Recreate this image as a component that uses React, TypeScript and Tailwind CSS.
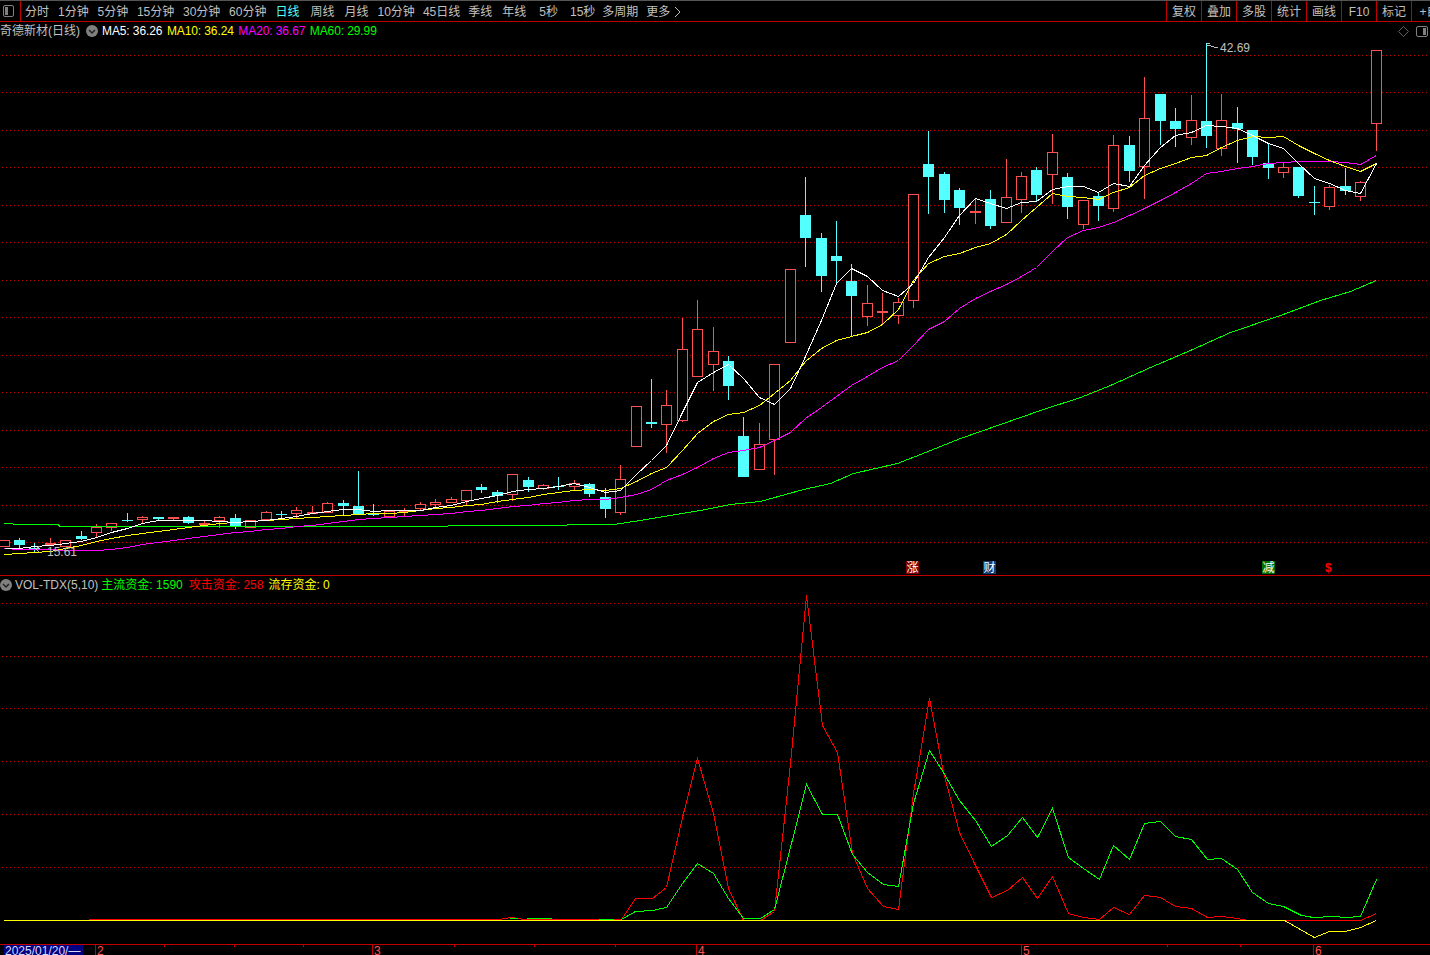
import React from "react";

// candle: [high, top, bottom, low, colour]
type Candle = [number, number, number, number, "r" | "c"];

const candles: Candle[] = [
  [540, 540, 547, 547, "r"], [538, 540, 545, 549, "c"], [543, 548, 549, 553, "c"], [538, 543, 545, 545, "r"],
  [540, 540, 547, 547, "r"], [531, 536, 539, 540, "c"], [524, 527, 533, 537, "r"], [523, 523, 528, 531, "r"],
  [513, 520, 521, 522, "c"], [516, 517, 520, 524, "r"], [517, 517, 519, 521, "c"], [517, 517, 519, 521, "r"],
  [516, 517, 523, 524, "c"], [521, 523, 525, 525, "r"], [516, 517, 521, 528, "r"], [514, 518, 527, 529, "c"],
  [520, 520, 528, 528, "r"], [511, 512, 520, 520, "r"], [511, 514, 515, 519, "c"], [507, 510, 514, 518, "r"],
  [506, 512, 514, 514, "r"], [502, 503, 513, 513, "r"], [500, 503, 506, 515, "c"], [471, 506, 514, 515, "c"],
  [504, 513, 515, 516, "c"], [511, 511, 517, 518, "r"], [508, 510, 511, 516, "r"], [502, 504, 509, 510, "r"],
  [499, 502, 505, 507, "r"], [497, 499, 503, 503, "r"], [490, 490, 501, 505, "r"], [484, 487, 490, 493, "c"],
  [490, 492, 496, 503, "c"], [474, 474, 495, 501, "r"], [477, 480, 487, 492, "c"], [484, 485, 489, 490, "r"],
  [477, 486, 487, 490, "c"], [480, 483, 487, 490, "r"], [483, 484, 494, 497, "c"], [488, 497, 509, 518, "c"],
  [465, 479, 513, 515, "r"], [406, 406, 447, 447, "r"], [379, 422, 424, 428, "c"], [390, 405, 425, 453, "r"],
  [318, 349, 421, 422, "r"], [300, 329, 377, 377, "r"], [327, 351, 365, 391, "r"], [356, 361, 386, 400, "c"],
  [417, 436, 477, 477, "c"], [423, 444, 470, 470, "r"], [364, 364, 440, 475, "r"], [269, 269, 343, 343, "r"],
  [177, 215, 238, 267, "c"], [233, 238, 276, 292, "c"], [221, 256, 261, 283, "c"], [264, 281, 296, 336, "c"],
  [285, 303, 317, 326, "r"], [293, 311, 312, 325, "r"], [298, 302, 316, 324, "r"], [194, 194, 301, 308, "r"],
  [131, 164, 177, 214, "c"], [172, 174, 200, 213, "c"], [188, 190, 208, 225, "c"], [198, 211, 212, 224, "r"],
  [190, 199, 226, 229, "c"], [159, 197, 223, 223, "r"], [172, 176, 200, 213, "r"], [167, 170, 195, 201, "c"],
  [134, 152, 175, 204, "r"], [173, 177, 207, 219, "c"], [200, 200, 225, 229, "r"], [192, 196, 206, 221, "c"],
  [135, 145, 209, 212, "r"], [136, 145, 171, 182, "c"], [77, 118, 167, 199, "r"], [94, 94, 121, 145, "c"],
  [108, 121, 129, 147, "c"], [95, 120, 138, 145, "r"], [43, 121, 136, 148, "c"], [94, 120, 149, 156, "r"],
  [107, 123, 129, 163, "c"], [130, 130, 157, 165, "c"], [143, 163, 168, 179, "c"], [162, 167, 173, 178, "r"],
  [167, 167, 196, 198, "c"], [186, 202, 203, 215, "c"], [185, 187, 207, 210, "r"], [168, 186, 191, 195, "c"],
  [181, 182, 197, 201, "r"], [50, 50, 124, 151, "r"],
];

const ma5 = [
  548, 548, 546, 545, 543, 541, 537, 532, 528, 523, 520, 520, 520, 520, 521, 522, 521, 520, 518, 516, 513, 511, 509, 509,
  511, 510, 510, 510, 507, 505, 501, 498, 495, 491, 489, 488, 486, 483, 487, 492, 490, 474, 460,
  445, 412, 382, 372, 364, 378, 397, 404, 388, 356, 320, 283, 268, 276, 290, 296, 283, 257, 237, 215, 198, 203, 208, 202, 201,
  189, 186, 186, 192, 183, 186, 165, 147, 135, 132, 125, 126, 128, 135, 143, 148, 163, 178, 183, 190, 193, 163,
];
const ma10 = [
  554, 553, 552, 551, 548, 545, 541, 538, 535, 533, 531, 529, 527, 525, 523, 522, 521, 520, 519, 518, 517, 516, 515, 514,
  513, 513, 512, 510, 508, 507, 505, 504, 501, 499, 497, 494, 492, 490, 489, 490, 488, 481, 473, 467,
  450, 433, 421, 414, 412, 405, 393, 380, 361, 348, 340, 336, 332, 324, 309,
  280, 263, 256, 253, 247, 243, 234, 220, 207, 193, 196, 197, 199, 192,
  187, 175, 168, 163, 157, 155, 147, 140, 136, 137, 136, 145, 153, 160, 166, 171, 163,
];
const ma20 = [
  548, 549, 549, 549, 550, 550, 550, 549, 547, 544, 542, 540, 538, 536, 534, 532, 531, 529, 528, 526, 525, 523, 521, 519,
  518, 517, 516, 515, 514, 513, 511, 510, 508, 506, 505, 503, 502, 500, 499, 499, 497, 494, 489, 480,
  474, 467, 458, 452, 450, 447, 440, 432, 418, 407, 396, 385, 376, 367, 360,
  345, 329, 321, 308, 298, 291, 284, 276, 267, 251, 237, 230, 227, 222,
  215, 208, 200, 192, 183, 173, 171, 168, 166, 163, 162, 161, 161, 161, 162, 164, 155,
];
const ma60 =
  "3,523 12,523 13,524 58,524 59,526 330,526 566,525 567,524 613,524 640,520 670,515 700,510 730,504 760,501 803,489 830,483 853,473 897,463 920,454 960,438 1000,424 1040,410 1080,397 1110,385 1150,367 1190,350 1230,332 1280,315 1320,300 1350,291 1376,280";

const volRed =
  "88,919 500,919 503,918 512,917 523,919 621,919 635,898 652,898 666,887 682,817 697,758 713,813 728,888 743,920 760,920 774,911 790,763 806,595 822,725 837,752 852,853 867,888 883,906 898,909 913,793 929,698 943,772 959,832 975,865 991,897 1007,890 1022,877 1037,898 1052,876 1068,913 1083,917 1099,919 1113,907 1129,914 1144,895 1160,897 1175,906 1191,908 1207,917 1221,916 1237,918 1248,920 1360,920 1376,913";
const volGreen =
  "621,919 635,911 652,910 666,907 682,883 697,863 713,873 728,898 743,918 760,918 774,909 790,847 806,784 822,814 837,814 852,854 867,872 883,884 898,886 913,803 929,750 943,772 959,800 975,820 991,846 1007,835 1022,817 1037,837 1052,808 1068,857 1083,868 1099,879 1113,845 1129,859 1144,823 1160,821 1175,836 1191,839 1207,859 1221,858 1237,869 1252,892 1268,903 1283,906 1301,915 1313,917 1333,916 1345,917 1360,916 1376,879";
const volYellow = "3,920 1284,920 1314,937 1329,931 1345,931 1360,927 1376,920";

const volGreenBits = ["509,918 517,918", "526,918 551,918", "598,919 613,919"];

const mainGrid = [55, 92, 130, 167, 205, 242, 280, 317, 355, 392, 430, 467, 505, 542];
const subGrid = [603, 656, 708, 761, 814, 867];

const leftTabs = ["1分钟", "5分钟", "15分钟", "30分钟", "60分钟"];
const rightButtons = ["复权", "叠加", "多股", "统计", "画线", "F10", "标记", "+自"];

const RED = "#ff5050";
const CYAN = "#54ffff";

const xAt = (i: number) => Math.floor(4 + 15.416 * i);
const toPoints = (ys: number[]) => ys.map((y, i) => `${xAt(i)},${y}`).join(" ");

// one pixel on, three off, same phase on every row
const dotRow = "h1m3 0".repeat(358);

function GridLines({ ys }: { ys: number[] }) {
  return (
    <>
      {ys.map((y) => (
        <path key={y} d={`M2 ${y + 0.5}${dotRow}`} fill="none" stroke="#d00000" />
      ))}
    </>
  );
}

function Line({ points, stroke }: { points: string; stroke: string }) {
  return <polyline points={points} fill="none" stroke={stroke} transform="translate(0.5 0.5)" />;
}

function CandleMark({ c, i }: { c: Candle; i: number }) {
  const [high, top, bottom, low, colour] = c;
  const x = xAt(i);
  const stroke = colour === "r" ? RED : CYAN;
  return (
    <g>
      <line x1={x + 0.5} x2={x + 0.5} y1={high} y2={top} stroke={stroke} />
      <line x1={x + 0.5} x2={x + 0.5} y1={bottom} y2={low} stroke={stroke} />
      {colour === "r" ? (
        <rect x={x - 4.5} y={top + 0.5} width={10} height={Math.max(bottom - top - 1, 1)} fill="#000" stroke={RED} />
      ) : (
        <rect x={x - 5} y={top} width={11} height={Math.max(bottom - top, 1)} fill={CYAN} />
      )}
    </g>
  );
}

function ChevronDot() {
  return (
    <svg width="12" height="12" viewBox="0 0 12 12" className="shrink-0">
      <circle cx="6" cy="6" r="6" fill="#808080" />
      <path d="M3 5l3 3 3-3" fill="none" stroke="#222" strokeWidth="1.5" />
    </svg>
  );
}

function Toolbar() {
  return (
    <div className="flex h-[22px] shrink-0 items-center justify-between border-t border-t-[#555] border-b border-b-[#c00000] text-[12px] text-[#c0c0c0]">
      <div className="flex h-full items-center pt-[1px]">
        <div className="-mt-[1px] flex h-[21px] w-[21px] items-center border-r border-[#c00000] pl-[3px]">
          <svg width="11" height="12" viewBox="0 0 11 12">
            <rect x="0.5" y="0.5" width="10" height="11" rx="1.5" fill="none" stroke="#808080" />
            <rect x="2" y="2" width="3" height="8" fill="#808080" />
          </svg>
        </div>
        <span className="ml-[4px]">分时</span>
        <div className="ml-[9px] flex gap-[8.75px]">
          {leftTabs.map((t) => (
            <span key={t}>{t}</span>
          ))}
        </div>
        <span className="ml-[9px] text-[#54ffff]">日线</span>
        <div className="ml-[11px] flex gap-[10px]">
          <span>周线</span>
          <span>月线</span>
        </div>
        <div className="ml-[9px] flex gap-[8px]">
          <span>10分钟</span>
          <span>45日线</span>
          <span>季线</span>
        </div>
        <span className="ml-[10px]">年线</span>
        <span className="ml-[13px]">5秒</span>
        <span className="ml-[12px]">15秒</span>
        <span className="ml-[7px]">多周期</span>
        <span className="ml-[8px] flex items-center gap-[4px]">
          更多
          <svg width="7" height="12" viewBox="0 0 7 12">
            <path d="M1 1l5 5-5 5" fill="none" stroke="#c0c0c0" />
          </svg>
        </span>
      </div>
      <div className="-mr-[16px] flex h-full">
        {rightButtons.map((b) => (
          <div key={b} className="flex h-full w-[35px] items-center justify-center border-l border-[#c00000] pt-[1px]">
            {b}
          </div>
        ))}
      </div>
    </div>
  );
}

function MainPane() {
  return (
    <div className="relative h-[554px] shrink-0 border-b border-[#c00000]">
      <svg width="1430" height="553" viewBox="0 22 1430 553" shapeRendering="crispEdges" className="block">
        <GridLines ys={mainGrid} />
        {candles.map((c, i) => (
          <CandleMark key={i} c={c} i={i} />
        ))}
        <Line points={ma60} stroke="#00ff00" />
        <Line points={toPoints(ma20)} stroke="#ff00ff" />
        <Line points={toPoints(ma10)} stroke="#ffff00" />
        <Line points={toPoints(ma5)} stroke="#ffffff" />
        {/* high and low markers */}
        <path d="M1207 43h3M1207 45l11 3" fill="none" stroke="#c0c0c0" />
        <path d="M40 546l-4 3 4 4" fill="none" stroke="#c0c0c0" />
        <text x="1220" y="52" fill="#c0c0c0" fontSize="12" fontFamily="Liberation Sans, sans-serif">
          42.69
        </text>
        <text x="47" y="556" fill="#c0c0c0" fontSize="12" fontFamily="Liberation Sans, sans-serif">
          15.61
        </text>
      </svg>
      <div className="absolute left-0 right-0 top-0 flex h-[18px] items-center text-[12px]">
        <span className="text-[#c0c0c0]">奇德新材(日线)</span>
        <span className="ml-[6px]">
          <ChevronDot />
        </span>
        <div className="ml-[4px] flex gap-[4.5px] tracking-[-0.1px]">
          <span className="text-white">MA5: 36.26</span>
          <span className="text-[#ffff00]">MA10: 36.24</span>
          <span className="text-[#ff00ff]">MA20: 36.67</span>
          <span className="text-[#00ff00]">MA60: 29.99</span>
        </div>
        <div className="ml-auto mr-[2px] flex items-center gap-[7px]">
          <svg width="11" height="11" viewBox="0 0 11 11">
            <path d="M5.5 0.5l5 5-5 5-5-5z" fill="none" stroke="#606060" />
          </svg>
          <svg width="12" height="11" viewBox="0 0 12 11">
            <rect x="0.5" y="0.5" width="11" height="10" rx="1.5" fill="none" stroke="#808080" />
            <rect x="7" y="2" width="3" height="7" fill="#808080" />
          </svg>
        </div>
      </div>
      <Marker x="left-[906px]" bg="bg-[#800000]" label="涨" />
      <Marker x="left-[983px]" bg="bg-[#103c78]" label="财" />
      <Marker x="left-[1262px]" bg="bg-[#007000]" label="减" />
      <span className="absolute left-[1325px] top-[539px] text-[12px] leading-[14px] font-bold text-[#ff0000]">$</span>
    </div>
  );
}

function Marker({ x, bg, label }: { x: string; bg: string; label: string }) {
  return (
    <span className={`absolute top-[539px] flex h-[13px] w-[13px] items-center justify-center text-[12px] text-white ${x} ${bg}`}>
      {label}
    </span>
  );
}

function VolPane() {
  return (
    <div className="relative h-[368px] shrink-0">
      <svg width="1430" height="368" viewBox="0 576 1430 368" shapeRendering="crispEdges" className="block">
        <GridLines ys={subGrid} />
        <Line points={volRed} stroke="#ff0000" />
        <Line points={volGreen} stroke="#00ff00" />
        {volGreenBits.map((p) => (
          <Line key={p} points={p} stroke="#00ff00" />
        ))}
        <Line points={volYellow} stroke="#ffff00" />
      </svg>
      <div className="absolute left-0 top-0 flex h-[17px] items-center text-[12px]">
        <ChevronDot />
        <span className="ml-[3px] text-[#c0c0c0]">VOL-TDX(5,10)</span>
        <span className="ml-[3px] text-[#00ff00]">主流资金: 1590</span>
        <span className="ml-[6px] text-[#ff0000]">攻击资金: 258</span>
        <span className="ml-[5px] text-[#ffff00]">流存资金: 0</span>
      </div>
    </div>
  );
}

const axisLabels = [
  { x: "left-[95px]", label: "2" },
  { x: "left-[372px]", label: "3" },
  { x: "left-[696px]", label: "4" },
  { x: "left-[1021px]", label: "5" },
  { x: "left-[1313px]", label: "6" },
];
const axisTicks = [164, 234, 303, 454, 534, 615, 1167, 1240];

function DateAxis() {
  return (
    <div className="relative h-[11px] shrink-0 overflow-hidden border-t border-[#c00000] text-[12px] leading-[13px] text-[#ff5050]">
      <svg width="1430" height="2" className="absolute left-0 top-0" shapeRendering="crispEdges">
        {axisTicks.map((x) => (
          <line key={x} x1={x + 0.5} x2={x + 0.5} y1={0} y2={2} stroke="#c00000" />
        ))}
      </svg>
      <div className="ml-[4px] h-full w-[79px] bg-[#000080] px-[1px] text-[#d8d8ff]">2025/01/20/—</div>
      {axisLabels.map((a) => (
        <span key={a.label} className={`absolute top-0 border-l border-[#c00000] pl-[1px] ${a.x}`}>
          {a.label}
        </span>
      ))}
    </div>
  );
}

export default function App() {
  return (
    <div
      className="flex h-[955px] w-[1430px] flex-col overflow-hidden bg-black"
      style={{ fontFamily: '"Liberation Sans", "Noto Sans CJK SC", sans-serif' }}
    >
      <Toolbar />
      <MainPane />
      <VolPane />
      <DateAxis />
    </div>
  );
}
